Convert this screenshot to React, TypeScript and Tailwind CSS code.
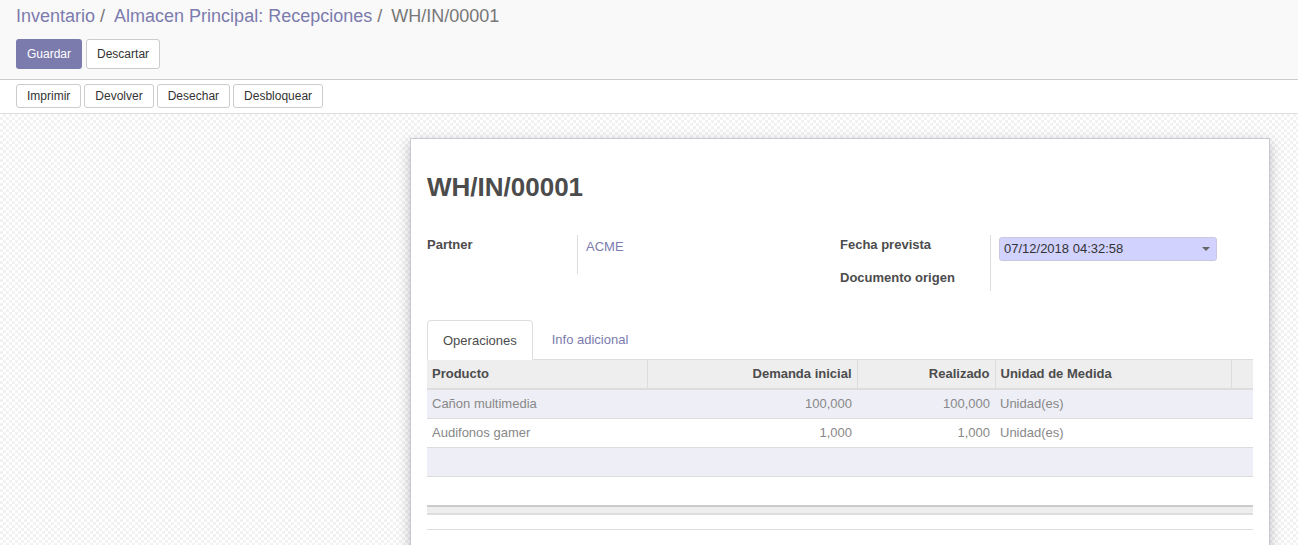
import React from 'react';

const font = { fontFamily: '"Liberation Sans", Arial, sans-serif' };

function SecondaryButton({ label, tall }: { label: string; tall?: boolean }) {
  return (
    <button
      className={
        'rounded-[3px] border border-[#cccccc] bg-white text-[12px] text-[#333] ' +
        (tall ? 'h-[30px] px-[10px]' : 'h-[24px] px-[10px]')
      }
    >
      {label}
    </button>
  );
}

const rows = [
  { product: 'Cañon multimedia', demand: '100,000', done: '100,000', uom: 'Unidad(es)' },
  { product: 'Audifonos gamer', demand: '1,000', done: '1,000', uom: 'Unidad(es)' },
];

export default function App() {
  return (
    <div style={font} className="h-[545px] w-[1298px] overflow-hidden text-[13px] text-[#4c4c4c]">
      {/* control panel */}
      <div className="h-[80px] border-b border-[#cccccc] bg-[#f9f9f9] px-4 pt-[5px]">
        <div className="flex items-center text-[18px] leading-[22px]">
          <span className="text-[#7c7bad]">Inventario</span>
          <span className="ml-[5px] mr-[9px] text-[#777]">/</span>
          <span className="text-[#7c7bad]">Almacen Principal: Recepciones</span>
          <span className="ml-[5px] mr-[9px] text-[#777]">/</span>
          <span className="text-[#777]">WH/IN/00001</span>
        </div>
        <div className="mt-[12px] flex gap-[4px]">
          <button className="h-[30px] rounded-[3px] bg-[#7c7bad] px-[11px] text-[12px] text-white">Guardar</button>
          <SecondaryButton label="Descartar" tall />
        </div>
      </div>

      {/* status bar */}
      <div className="flex h-[34px] gap-[3px] border-b border-[#dddddd] bg-white px-4 pt-[4px]">
        <SecondaryButton label="Imprimir" />
        <SecondaryButton label="Devolver" />
        <SecondaryButton label="Desechar" />
        <SecondaryButton label="Desbloquear" />
      </div>

      {/* sheet background */}
      <div className="h-[431px] bg-white bg-[conic-gradient(#f2f2f2_25%,#ffffff_0_50%,#f2f2f2_0_75%,#ffffff_0)] bg-[length:6px_6px] pt-[24px]">
        <div className="ml-[410px] h-[420px] w-[860px] border border-[#c9c9d6] bg-white px-4 pt-[33px] shadow-[0_4px_12px_rgba(0,0,0,0.25)]">
          <h1 className="text-[26px] font-bold leading-[30px] text-[#4c4c4c]">WH/IN/00001</h1>

          {/* fields */}
          <div className="mt-[33px] flex">
            <div className="flex w-[413px]">
              <div className="w-[150px] font-bold">Partner</div>
              <div className="h-[39px] border-l border-[#dddddd] pl-[8px] pt-[2px] text-[#7c7bad]">ACME</div>
            </div>
            <div className="flex">
              <div className="w-[150px] font-bold">
                <div className="h-[33px]">Fecha prevista</div>
                <div>Documento origen</div>
              </div>
              <div className="h-[56px] border-l border-[#dddddd] pl-[8px] pt-[2px]">
                <div className="flex h-[24px] w-[218px] items-center justify-between rounded-[3px] border border-[#c8c8e0] bg-[#d2d2ff] pl-[4px] pr-[6px] text-[#333]">
                  <span>07/12/2018 04:32:58</span>
                  <span className="h-0 w-0 border-x-[4px] border-t-[4px] border-x-transparent border-t-[#666]" />
                </div>
              </div>
            </div>
          </div>

          {/* tabs */}
          <div className="mt-[29px] flex border-b border-[#dddddd]">
            <div className="-mb-px h-[40px] rounded-t-[4px] border border-b-white border-[#dddddd] bg-white px-[15px] pt-[10px] text-[#4c4c4c]">
              Operaciones
            </div>
            <div className="ml-[2px] h-[39px] px-[17px] pt-[10px] text-[#7c7bad]">Info adicional</div>
          </div>

          {/* table */}
          <table className="w-[826px] table-fixed border-collapse">
            <colgroup>
              <col className="w-[220px]" />
              <col className="w-[210px]" />
              <col className="w-[138px]" />
              <col className="w-[236px]" />
              <col className="w-[22px]" />
            </colgroup>
            <thead>
              <tr className="h-[29px] border-b-2 border-[#dddddd] bg-[#eeeeee] font-bold text-[#4c4c4c]">
                <th className="border-r border-[#dddddd] px-[5px] text-left">Producto</th>
                <th className="border-r border-[#dddddd] px-[5px] text-right">Demanda inicial</th>
                <th className="border-r border-[#dddddd] px-[5px] text-right">Realizado</th>
                <th className="border-r border-[#dddddd] px-[5px] text-left">Unidad de Medida</th>
                <th />
              </tr>
            </thead>
            <tbody className="text-[#888888]">
              {rows.map((r, i) => (
                <tr key={r.product} className={'h-[29px] border-b border-[#dddddd] ' + (i % 2 === 0 ? 'bg-[#eeeef6]' : 'bg-white')}>
                  <td className="px-[5px]">{r.product}</td>
                  <td className="px-[5px] text-right">{r.demand}</td>
                  <td className="px-[5px] text-right">{r.done}</td>
                  <td className="px-[5px]">{r.uom}</td>
                  <td />
                </tr>
              ))}
              <tr className="h-[29px] border-b border-[#dddddd] bg-[#eeeef6]">
                <td colSpan={5} />
              </tr>
              <tr className="h-[30px]">
                <td colSpan={5} />
              </tr>
            </tbody>
            <tfoot>
              <tr className="h-[8px] border-y-2 border-t-[#cccccc] border-b-[#dddddd] bg-[#eeeeee]">
                <td colSpan={5} />
              </tr>
            </tfoot>
          </table>
          <div className="mt-[14px] border-t border-[#dddddd]" />
        </div>
      </div>
    </div>
  );
}
